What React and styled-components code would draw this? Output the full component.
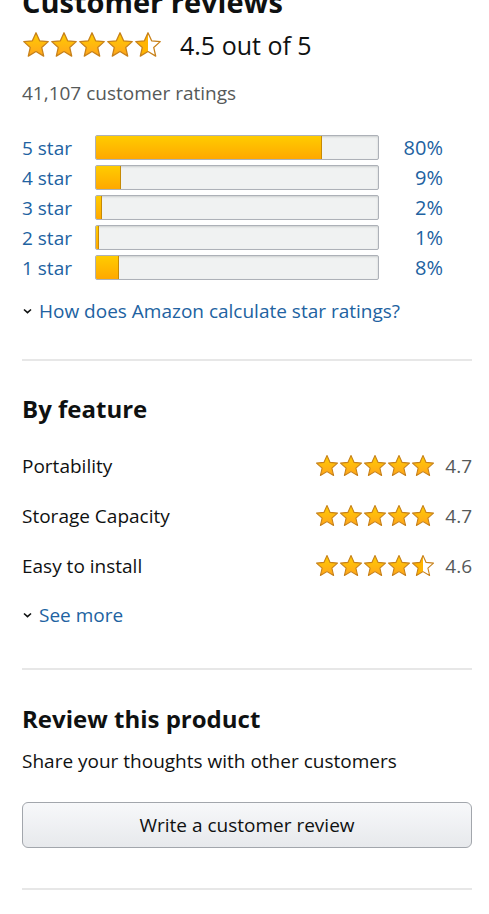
import React from "react";
import styled, { createGlobalStyle } from "styled-components";

const Global = createGlobalStyle`
  body {
    margin: 0;
    background: #fff;
    font-family: "Open Sans", "Noto Sans", sans-serif;
    color: #0f1111;
  }
`;

const Page = styled.div`
  padding: 0 17px 0 22px;
  margin-top: -14px;
`;

const Title = styled.h2`
  margin: 0;
  font-size: 29px;
  line-height: 32px;
  font-weight: 700;
`;

const StarLine = styled.div`
  display: flex;
  align-items: center;
  gap: 18px;
  margin-top: 12px;
  height: 30px;
`;

const Stars = styled.div`
  display: flex;
  gap: ${(p) => p.$gap}px;
`;

const Big = styled.span`
  font-size: 25px;
  line-height: 30px;
`;

const Grey = styled.div`
  color: #565959;
  font-size: 19px;
  line-height: 24px;
  margin-top: 21px;
`;

const Histo = styled.div`
  display: flex;
  flex-direction: column;
  gap: 5px;
  margin-top: 29px;
`;

const HRow = styled.div`
  display: grid;
  grid-template-columns: 73px 284px 64px;
  align-items: center;
  height: 25px;
  font-size: 19px;
  color: #2162a1;
`;

const Track = styled.div`
  height: 23px;
  border: 1px solid #adb1b8;
  border-radius: 2px;
  background: #f0f2f2;
  box-shadow: inset 0 1px 2px rgba(15, 17, 17, 0.15);
  overflow: hidden;
  display: flex;
`;

const Fill = styled.div`
  height: 100%;
  background: linear-gradient(to bottom, #ffcc00, #ffa800);
  border-right: 1px solid #c68a05;
  box-sizing: border-box;
`;

const Pct = styled.span`
  text-align: right;
  font-size: 20px;
`;

const Expander = styled.div`
  display: flex;
  align-items: center;
  gap: 6px;
  margin-top: ${(p) => p.$top}px;
  font-size: 19px;
  line-height: 26px;
  color: #2162a1;
`;

const Divider = styled.hr`
  border: 0;
  border-top: 2px solid #e7e7e7;
  margin: ${(p) => p.$top}px 0 0;
`;

const Heading = styled.h3`
  margin: ${(p) => p.$top}px 0 0;
  font-size: 24px;
  line-height: 30px;
  font-weight: 700;
`;

const Features = styled.div`
  display: flex;
  flex-direction: column;
  gap: 25px;
  margin-top: 29px;
`;

const FRow = styled.div`
  display: flex;
  align-items: center;
  justify-content: space-between;
  height: 25px;
  font-size: 19px;
`;

const FRight = styled.div`
  display: flex;
  align-items: center;
  gap: 10px;
  color: #565959;
`;

const Plain = styled.div`
  font-size: 19px;
  line-height: 26px;
  margin-top: 14px;
`;

const Button = styled.button`
  display: block;
  width: 100%;
  height: 46px;
  margin-top: 28px;
  border: 1px solid #a2a6ac;
  border-radius: 6px;
  background: linear-gradient(to bottom, #f7f8fa, #e7e9ec);
  font-family: inherit;
  font-size: 19px;
  color: #0f1111;
`;

const STAR = "M12 1.5l3.1 6.9 7.4.7-5.6 5 1.7 7.4L12 17.6l-6.6 3.9 1.7-7.4-5.6-5 7.4-.7z";

function Star({ size, kind }) {
  return (
    <svg width={size} height={size} viewBox="0 0 24 24">
      <defs>
        <linearGradient id="gy" x1="0" y1="0" x2="0" y2="1">
          <stop offset="0" stopColor="#ffce00" />
          <stop offset="1" stopColor="#ffa41c" />
        </linearGradient>
        <linearGradient id="gh" x1="0" y1="0" x2="1" y2="0">
          <stop offset="0.5" stopColor="#ffb400" />
          <stop offset="0.5" stopColor="#fff" />
        </linearGradient>
      </defs>
      <path
        d={STAR}
        fill={kind === "half" ? "url(#gh)" : "url(#gy)"}
        stroke="#c7811a"
        strokeWidth="1.1"
        strokeLinejoin="round"
      />
    </svg>
  );
}

function Rating({ value, size, gap }) {
  return (
    <Stars $gap={gap}>
      {[0, 1, 2, 3, 4].map((i) => (
        <Star key={i} size={size} kind={value - i >= 0.7 ? "full" : "half"} />
      ))}
    </Stars>
  );
}

function Chevron() {
  return (
    <svg width="11" height="8" viewBox="0 0 11 8">
      <path d="M2 2.5l3.5 3.2L9 2.5" fill="none" stroke="#0f1111" strokeWidth="1.6" />
    </svg>
  );
}

const histogram = [
  ["5 star", 80],
  ["4 star", 9],
  ["3 star", 2],
  ["2 star", 1],
  ["1 star", 8],
];

const features = [
  ["Portability", 4.7],
  ["Storage Capacity", 4.7],
  ["Easy to install", 4.6],
];

export default function App() {
  return (
    <Page>
      <Global />
      <Title>Customer reviews</Title>
      <StarLine>
        <Rating value={4.5} size={28} gap={0} />
        <Big>4.5 out of 5</Big>
      </StarLine>
      <Grey>41,107 customer ratings</Grey>
      <Histo>
        {histogram.map(([label, pct]) => (
          <HRow key={label}>
            <span>{label}</span>
            <Track>
              <Fill style={{ width: `${pct}%` }} />
            </Track>
            <Pct>{pct}%</Pct>
          </HRow>
        ))}
      </Histo>
      <Expander $top={19}>
        <Chevron />
        How does Amazon calculate star ratings?
      </Expander>
      <Divider $top={35} />
      <Heading $top={33}>By feature</Heading>
      <Features>
        {features.map(([name, v]) => (
          <FRow key={name}>
            <span>{name}</span>
            <FRight>
              <Rating value={v} size={24} gap={0} />
              <span>{v}</span>
            </FRight>
          </FRow>
        ))}
      </Features>
      <Expander $top={24}>
        <Chevron />
        See more
      </Expander>
      <Divider $top={40} />
      <Heading $top={34}>Review this product</Heading>
      <Plain>Share your thoughts with other customers</Plain>
      <Button>Write a customer review</Button>
      <Divider $top={40} />
    </Page>
  );
}
